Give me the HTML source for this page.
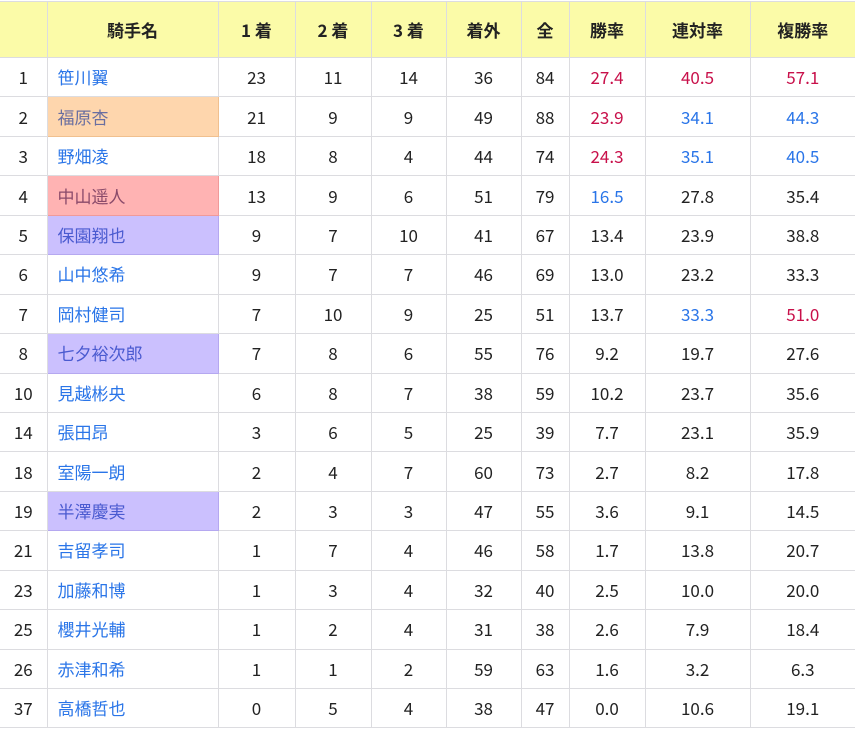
<!DOCTYPE html>
<html><head><meta charset="utf-8"><style>
html,body{margin:0;padding:0;background:#fff;}
table{border-collapse:collapse;width:855px;table-layout:fixed;font-family:"Noto Sans CJK JP",sans-serif;font-size:17px;color:#222;margin-top:1px;}
td,th{border:1px solid #dcdce0;text-align:center;padding:0;line-height:20px;}
th{height:55px;background:#fbfba8;font-weight:bold;font-size:17px;}
td{height:38.45px;}
td.n{text-align:left;padding-left:10px;color:#2a75e8;}
.o{background:#fed6ad;border-color:#f0c08f;color:#6a6fa0!important}
.r{background:#ffb3b3;border-color:#f09a9a;color:#8a4a6a!important}
.p{background:#cbc0fe;border-color:#b5a8f0;color:#4a5ad0!important}
.R{color:#c8104a}.B{color:#2a75e8}
tr>*:first-child{border-left:none}
tr>*:last-child{border-right:none}
</style></head><body>
<table>
<colgroup><col style="width:47px"><col style="width:171px"><col style="width:77px"><col style="width:76px"><col style="width:75px"><col style="width:75px"><col style="width:48px"><col style="width:76px"><col style="width:105px"><col style="width:105px"></colgroup>
<tr><th></th><th>騎手名</th><th>1 着</th><th>2 着</th><th>3 着</th><th>着外</th><th>全</th><th>勝率</th><th>連対率</th><th>複勝率</th></tr>
<tr><td>1</td><td class="n">笹川翼</td><td>23</td><td>11</td><td>14</td><td>36</td><td>84</td><td class="R">27.4</td><td class="R">40.5</td><td class="R">57.1</td></tr>
<tr><td>2</td><td class="n o">福原杏</td><td>21</td><td>9</td><td>9</td><td>49</td><td>88</td><td class="R">23.9</td><td class="B">34.1</td><td class="B">44.3</td></tr>
<tr><td>3</td><td class="n">野畑凌</td><td>18</td><td>8</td><td>4</td><td>44</td><td>74</td><td class="R">24.3</td><td class="B">35.1</td><td class="B">40.5</td></tr>
<tr><td>4</td><td class="n r">中山遥人</td><td>13</td><td>9</td><td>6</td><td>51</td><td>79</td><td class="B">16.5</td><td>27.8</td><td>35.4</td></tr>
<tr><td>5</td><td class="n p">保園翔也</td><td>9</td><td>7</td><td>10</td><td>41</td><td>67</td><td>13.4</td><td>23.9</td><td>38.8</td></tr>
<tr><td>6</td><td class="n">山中悠希</td><td>9</td><td>7</td><td>7</td><td>46</td><td>69</td><td>13.0</td><td>23.2</td><td>33.3</td></tr>
<tr><td>7</td><td class="n">岡村健司</td><td>7</td><td>10</td><td>9</td><td>25</td><td>51</td><td>13.7</td><td class="B">33.3</td><td class="R">51.0</td></tr>
<tr><td>8</td><td class="n p">七夕裕次郎</td><td>7</td><td>8</td><td>6</td><td>55</td><td>76</td><td>9.2</td><td>19.7</td><td>27.6</td></tr>
<tr><td>10</td><td class="n">見越彬央</td><td>6</td><td>8</td><td>7</td><td>38</td><td>59</td><td>10.2</td><td>23.7</td><td>35.6</td></tr>
<tr><td>14</td><td class="n">張田昂</td><td>3</td><td>6</td><td>5</td><td>25</td><td>39</td><td>7.7</td><td>23.1</td><td>35.9</td></tr>
<tr><td>18</td><td class="n">室陽一朗</td><td>2</td><td>4</td><td>7</td><td>60</td><td>73</td><td>2.7</td><td>8.2</td><td>17.8</td></tr>
<tr><td>19</td><td class="n p">半澤慶実</td><td>2</td><td>3</td><td>3</td><td>47</td><td>55</td><td>3.6</td><td>9.1</td><td>14.5</td></tr>
<tr><td>21</td><td class="n">吉留孝司</td><td>1</td><td>7</td><td>4</td><td>46</td><td>58</td><td>1.7</td><td>13.8</td><td>20.7</td></tr>
<tr><td>23</td><td class="n">加藤和博</td><td>1</td><td>3</td><td>4</td><td>32</td><td>40</td><td>2.5</td><td>10.0</td><td>20.0</td></tr>
<tr><td>25</td><td class="n">櫻井光輔</td><td>1</td><td>2</td><td>4</td><td>31</td><td>38</td><td>2.6</td><td>7.9</td><td>18.4</td></tr>
<tr><td>26</td><td class="n">赤津和希</td><td>1</td><td>1</td><td>2</td><td>59</td><td>63</td><td>1.6</td><td>3.2</td><td>6.3</td></tr>
<tr><td>37</td><td class="n">高橋哲也</td><td>0</td><td>5</td><td>4</td><td>38</td><td>47</td><td>0.0</td><td>10.6</td><td>19.1</td></tr>
</table>
</body></html>
